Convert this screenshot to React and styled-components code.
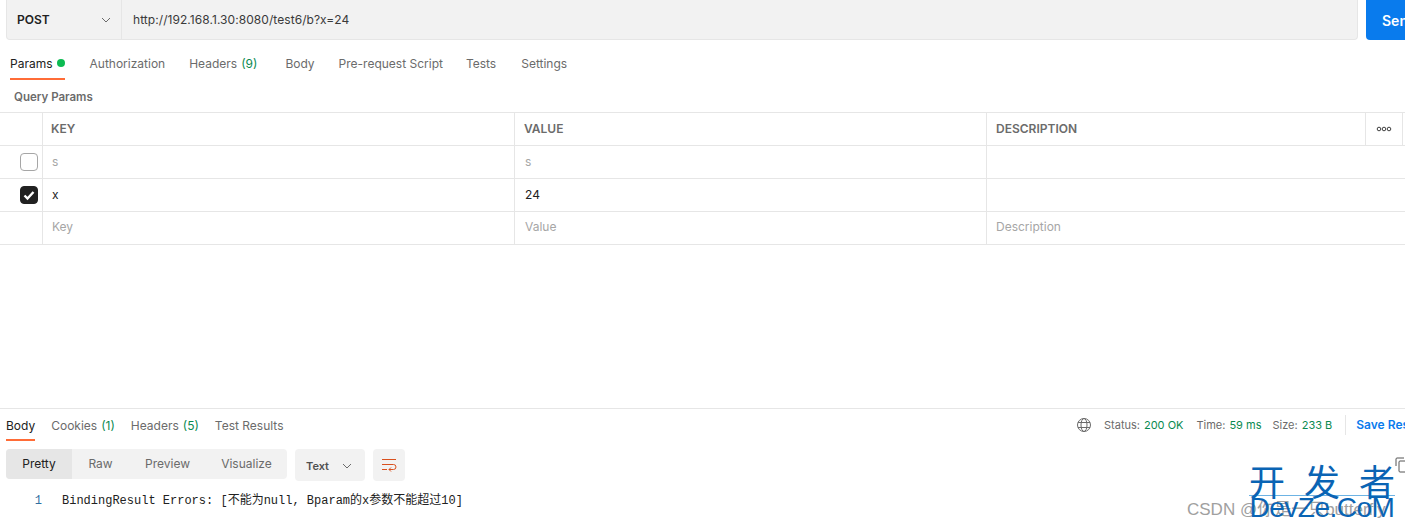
import React from "react";
import styled, { createGlobalStyle } from "styled-components";

const GlobalStyle = createGlobalStyle`
  html, body {
    margin: 0;
    padding: 0;
    background: #fff;
    overflow: hidden;
  }
  body {
    font-family: Inter, "Noto Sans CJK SC", sans-serif;
    font-size: 12px;
    color: #212121;
  }
`;

const Page = styled.div`
  position: relative;
  width: 1405px;
  height: 530px;
  overflow: hidden;
  display: flex;
  flex-direction: column;
`;

const RequestBar = styled.div`
  display: flex;
  gap: 8px;
  height: 40px;
  padding-left: 6px;
  flex: none;
`;

const UrlGroup = styled.div`
  width: 1352px;
  box-sizing: border-box;
  flex: none;
  display: flex;
  background: #f2f2f2;
  border: 1px solid #e6e6e6;
  border-top: 0;
  border-radius: 0 0 4px 4px;
`;

const Method = styled.div`
  width: 115px;
  box-sizing: border-box;
  flex: none;
  display: flex;
  align-items: center;
  justify-content: space-between;
  padding: 0 9px 0 10px;
  border-right: 1px solid #e6e6e6;
  font-weight: 600;
  color: #212121;
`;

const Url = styled.div`
  display: flex;
  align-items: center;
  padding: 0 0 1px 11px;
  font-size: 12px;
  letter-spacing: 0.06px;
  color: #3a3a3a;
`;

const SendButton = styled.div`
  flex: none;
  width: 60px;
  padding-left: 16px;
  display: flex;
  align-items: center;
  background: #097bed;
  color: #fff;
  font-size: 14px;
  font-weight: 600;
  border-radius: 0 0 0 4px;
`;

const Tabs = styled.div`
  display: flex;
  box-sizing: border-box;
  height: ${(p) => p.$height}px;
  padding: ${(p) => p.$top}px 0 0 ${(p) => p.$left}px;
  flex: none;
`;

const Tab = styled.div`
  display: flex;
  align-items: center;
  gap: 4px;
  box-sizing: border-box;
  height: 100%;
  margin-right: ${(p) => p.$gap}px;
  font-size: 12px;
  white-space: nowrap;
  color: ${(p) => (p.$active ? "#212121" : "#6b6b6b")};
  border-bottom: 2px solid ${(p) => (p.$active ? "#ff6c37" : "transparent")};
`;

const Count = styled.span`
  color: #0a8a50;
`;

const GreenDot = styled.span`
  width: 8px;
  height: 8px;
  border-radius: 50%;
  background: #0cbb52;
`;

const SectionTitle = styled.div`
  padding: 10px 0 0 14px;
  height: 22px;
  flex: none;
  font-size: 11.5px;
  font-weight: 600;
  color: #6b6b6b;
  line-height: 14px;
`;

const Table = styled.div`
  border-top: 1px solid #e6e6e6;
  flex: none;
`;

const Row = styled.div`
  display: grid;
  grid-template-columns: 43px 472px 472px 379px 37px 2px;
  height: 33px;
  box-sizing: border-box;
  border-bottom: 1px solid #e6e6e6;

  & > * {
    padding-bottom: ${(p) => (p.$lift ? 3 : 1)}px;
  }
`;

const Cell = styled.div`
  display: flex;
  align-items: center;
  box-sizing: border-box;
  padding-left: ${(p) => p.$pad ?? 9}px;
  border-right: 1px solid #e6e6e6;
  font-size: 12px;
  color: ${(p) => p.$color || "#212121"};
`;

const WideCell = styled(Cell)`
  grid-column: span 3;
  border-right: 0;
`;

const HeadCell = styled(Cell)`
  font-weight: 600;
  color: #6b6b6b;
`;

const CheckCell = styled(Cell)`
  padding-left: 20px;
`;

const MoreCell = styled(Cell)`
  justify-content: center;
  padding-left: 0;
`;

const Checkbox = styled.span`
  width: 18px;
  height: 18px;
  box-sizing: border-box;
  border-radius: 4px;
  flex: none;
  display: flex;
  align-items: center;
  justify-content: center;
  border: 1px solid ${(p) => (p.$checked ? "#212121" : "#a6a6a6")};
  background: ${(p) => (p.$checked ? "#212121" : "#fff")};
`;

const Spacer = styled.div`
  flex: 1;
`;

const ResponsePane = styled.div`
  height: 122px;
  flex: none;
`;

const ResponseHeader = styled.div`
  display: flex;
  justify-content: space-between;
  height: 32px;
  padding-left: 6px;
  border-top: 1px solid #e6e6e6;
`;

const StatusBar = styled.div`
  display: flex;
  align-items: center;
  height: 32px;
  font-size: 11px;
  color: #6b6b6b;
  white-space: nowrap;
  width: 328px;
  flex: none;
`;

const StatusItem = styled.span`
  margin-right: ${(p) => p.$gap}px;
`;

const StatusValue = styled.span`
  color: #0a8a50;
  margin-left: 4px;
`;

const SaveLink = styled.span`
  padding-left: 10px;
  height: 20px;
  line-height: 20px;
  border-left: 1px solid #e6e6e6;
  color: #097bed;
  font-size: 12px;
  font-weight: 600;
`;

const GlobeBox = styled.span`
  display: flex;
  margin-right: 13px;
`;

const Toolbar = styled.div`
  display: flex;
  gap: 8px;
  padding: 8px 0 0 6px;
`;

const Segments = styled.div`
  display: flex;
  height: 30px;
  width: 281px;
  background: #f2f2f2;
  border-radius: 4px;
  overflow: hidden;
`;

const Segment = styled.div`
  display: flex;
  align-items: center;
  justify-content: center;
  box-sizing: border-box;
  padding-bottom: 2px;
  width: ${(p) => p.$width}px;
  font-size: 12px;
  color: ${(p) => (p.$active ? "#212121" : "#6b6b6b")};
  background: ${(p) => (p.$active ? "#e6e6e6" : "transparent")};
`;

const Dropdown = styled.div`
  display: flex;
  align-items: center;
  justify-content: space-between;
  box-sizing: border-box;
  width: 70px;
  height: 32px;
  padding: 2px 12px 0 11px;
  background: #f2f2f2;
  border-radius: 4px;
  font-size: 11px;
  font-weight: 600;
  color: #505050;
`;

const WrapButton = styled.div`
  display: flex;
  align-items: center;
  justify-content: center;
  width: 32px;
  height: 32px;
  background: #f2f2f2;
  border-radius: 4px;
`;

const CodeLine = styled.div`
  display: flex;
  padding-top: 13px;
  font-family: "Liberation Mono", "Noto Sans CJK SC", monospace;
  font-size: 12px;
  line-height: 14px;
`;

const LineNumber = styled.span`
  width: 62px;
  box-sizing: border-box;
  padding-right: 20px;
  text-align: right;
  color: #2f6f9f;
  flex: none;
`;

const CodeText = styled.span`
  color: #212121;
  white-space: pre;
`;

const CopyMark = styled.svg`
  position: absolute;
  left: 1395px;
  top: 457px;
`;

const Credit = styled.div`
  position: absolute;
  left: 1187px;
  top: 500px;
  font-family: "Liberation Sans", "Noto Sans CJK SC", sans-serif;
  font-size: 17px;
  line-height: 20px;
  white-space: nowrap;
  color: #a0a0a0;
`;

const Watermark = styled.div`
  position: absolute;
  left: 1249px;
  top: 464px;
  width: 146px;
  color: #0a64b4;
  text-align: center;
`;

const WatermarkCjk = styled.div`
  display: flex;
  justify-content: space-between;
  font-family: "Noto Sans CJK SC", sans-serif;
  font-size: 36px;
  line-height: 32px;
  height: 31px;
  border-bottom: 1px solid #6db3e4;
`;

const WatermarkLatin = styled.div`
  margin-top: -2px;
  font-family: "Liberation Sans", sans-serif;
  font-size: 28px;
  line-height: 28px;
  letter-spacing: -0.5px;
  white-space: nowrap;
`;

const Chevron = ({ color = "#6b6b6b" }) => (
  <svg width="12" height="12" viewBox="0 0 12 12" fill="none">
    <path d="M2 4l4 4 4-4" stroke={color} strokeWidth="1" />
  </svg>
);

const CheckIcon = () => (
  <svg width="14" height="14" viewBox="0 0 14 14" fill="none">
    <path d="M2.5 7.5l3 3L11.5 4" stroke="#fff" strokeWidth="2.4" />
  </svg>
);

const MoreIcon = () => (
  <svg width="16" height="6" viewBox="0 0 16 6" fill="none" stroke="#404040">
    <circle cx="3" cy="3" r="1.8" />
    <circle cx="8" cy="3" r="1.8" />
    <circle cx="13" cy="3" r="1.8" />
  </svg>
);

const GlobeIcon = () => (
  <svg width="14" height="14" viewBox="0 0 14 14" fill="none" stroke="#6b6b6b">
    <circle cx="7" cy="7" r="6.5" />
    <ellipse cx="7" cy="7" rx="3" ry="6.5" />
    <path d="M1 4.5h12M1 9.5h12" />
  </svg>
);

const WrapIcon = () => (
  <svg width="16" height="14" viewBox="0 0 16 14" fill="none" stroke="#d9501e">
    <path d="M1 1.5h14M1 11.5h5M1 6.5h11.5a2.5 2.5 0 0 1 0 5H8" />
    <path d="M10 9.5l-2 2 2 2" />
  </svg>
);

const requestTabs = [
  { label: "Params", gap: 25, active: true, dot: true },
  { label: "Authorization", gap: 24 },
  { label: "Headers", count: "(9)", gap: 28 },
  { label: "Body", gap: 24 },
  { label: "Pre-request Script", gap: 23 },
  { label: "Tests", gap: 25 },
  { label: "Settings", gap: 0 },
];

const responseTabs = [
  { label: "Body", gap: 16, active: true },
  { label: "Cookies", count: "(1)", gap: 16 },
  { label: "Headers", count: "(5)", gap: 16 },
  { label: "Test Results", gap: 0 },
];

const renderTab = (tab) => (
  <Tab key={tab.label} $active={tab.active} $gap={tab.gap}>
    {tab.label}
    {tab.count && <Count>{tab.count}</Count>}
    {tab.dot && <GreenDot />}
  </Tab>
);

const rows = [
  { key: "s", value: "s", color: "#a6a6a6" },
  { key: "x", value: "24", checked: true },
];

export default function App() {
  return (
    <Page>
      <GlobalStyle />
      <RequestBar>
        <UrlGroup>
          <Method>
            POST
            <Chevron />
          </Method>
          <Url>http://192.168.1.30:8080/test6/b?x=24</Url>
        </UrlGroup>
        <SendButton>Send</SendButton>
      </RequestBar>

      <Tabs $height={40} $top={8} $left={10}>
        {requestTabs.map(renderTab)}
      </Tabs>
      <SectionTitle>Query Params</SectionTitle>

      <Table>
        <Row>
          <Cell />
          <HeadCell $pad={8}>KEY</HeadCell>
          <HeadCell>VALUE</HeadCell>
          <HeadCell>DESCRIPTION</HeadCell>
          <MoreCell>
            <MoreIcon />
          </MoreCell>
        </Row>
        {rows.map((row) => (
          <Row key={row.key}>
            <CheckCell>
              <Checkbox $checked={row.checked}>
                {row.checked && <CheckIcon />}
              </Checkbox>
            </CheckCell>
            <Cell $color={row.color}>{row.key}</Cell>
            <Cell $color={row.color} $pad={10}>
              {row.value}
            </Cell>
            <WideCell />
          </Row>
        ))}
        <Row $lift>
          <Cell />
          <Cell $color="#a6a6a6">Key</Cell>
          <Cell $color="#a6a6a6" $pad={10}>
            Value
          </Cell>
          <WideCell $color="#a6a6a6">Description</WideCell>
        </Row>
      </Table>

      <Spacer />

      <ResponsePane>
        <ResponseHeader>
          <Tabs $height={32} $top={2} $left={0}>
            {responseTabs.map(renderTab)}
          </Tabs>
          <StatusBar>
            <GlobeBox>
              <GlobeIcon />
            </GlobeBox>
            <StatusItem $gap={13}>
              Status:<StatusValue>200 OK</StatusValue>
            </StatusItem>
            <StatusItem $gap={11}>
              Time:<StatusValue>59 ms</StatusValue>
            </StatusItem>
            <StatusItem $gap={13}>
              Size:<StatusValue>233 B</StatusValue>
            </StatusItem>
            <SaveLink>Save Response</SaveLink>
          </StatusBar>
        </ResponseHeader>

        <Toolbar>
          <Segments>
            <Segment $active $width={66}>
              Pretty
            </Segment>
            <Segment $width={57}>Raw</Segment>
            <Segment $width={77}>Preview</Segment>
            <Segment $width={81}>Visualize</Segment>
          </Segments>
          <Dropdown>
            Text
            <Chevron />
          </Dropdown>
          <WrapButton>
            <WrapIcon />
          </WrapButton>
        </Toolbar>

        <CodeLine>
          <LineNumber>1</LineNumber>
          <CodeText>BindingResult Errors: [不能为null, Bparam的x参数不能超过10]</CodeText>
        </CodeLine>
      </ResponsePane>

      <CopyMark width="14" height="16" viewBox="0 0 14 16" fill="none" stroke="#555">
        <path d="M1 9V2a1 1 0 0 1 1-1h7" />
        <rect x="4" y="4" width="10" height="11" rx="1" />
      </CopyMark>
      <Credit>CSDN @你是一只butterfly</Credit>
      <Watermark>
        <WatermarkCjk>
          <span>开</span>
          <span>发</span>
          <span>者</span>
        </WatermarkCjk>
        <WatermarkLatin>DevZe.CoM</WatermarkLatin>
      </Watermark>
    </Page>
  );
}
